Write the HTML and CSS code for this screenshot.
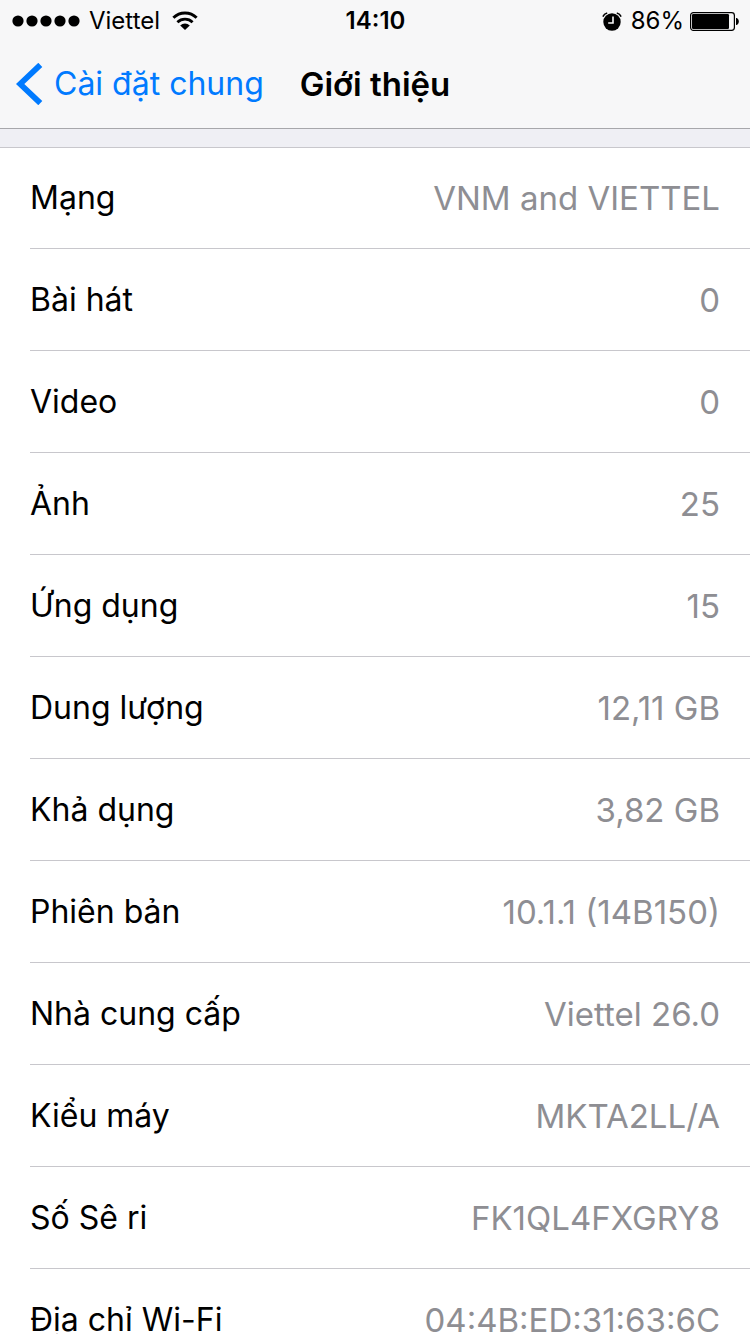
FILE: index.html
```html
<!DOCTYPE html>
<html lang="vi">
<head>
	<meta charset="utf-8">
	<meta name="viewport" content="width=device-width">
	<title>Giới thiệu</title>
	<link rel="stylesheet" href="styles.css">
</head>
<body>

<header class="header">
	<div class="status">
		<div class="status-left">
			<svg class="signal" width="68" height="12" viewBox="0 0 68 12">
				<circle cx="6" cy="6" r="5.6"/>
				<circle cx="20" cy="6" r="5.6"/>
				<circle cx="34" cy="6" r="5.6"/>
				<circle cx="48" cy="6" r="5.6"/>
				<circle cx="62" cy="6" r="5.6"/>
			</svg>
			<span>Viettel</span>
			<svg class="wifi" width="26" height="20" viewBox="0 0 26 20">
				<path d="M1.400 6.700a16.600 16.600 0 0 1 23.200 0" fill="none" stroke="#000" stroke-width="3"/>
				<path d="M5.400 11.200a11 11 0 0 1 15.200 0" fill="none" stroke="#000" stroke-width="2.800"/>
				<path d="M8.200 14.500a7 7 0 0 1 9.600 0L13 19z"/>
			</svg>
		</div>
		<time class="time">14:10</time>
		<div class="status-right">
			<svg class="alarm" width="20" height="19" viewBox="0 0 20 19">
				<circle cx="10" cy="10" r="8.700"/>
				<path d="M.9 4.600A6 6 0 0 1 5.200 1M19.100 4.600A6 6 0 0 0 14.800 1" fill="none" stroke="#000" stroke-width="1.600"/>
				<path d="M11 4.600v6.400H6.200" fill="none" stroke="#f7f7f8" stroke-width="1.600"/>
			</svg>
			<span>86%</span>
			<svg class="battery" width="49" height="19" viewBox="0 0 49 19">
				<rect x=".6" y=".6" width="43.800" height="17.800" rx="2.800" fill="none" stroke="#000" stroke-width="1.200"/>
				<rect x="2" y="2" width="37" height="15" rx="1.200"/>
				<path d="M46 6h.6c1.300.3 2.200 1.800 2.200 3.500s-.9 3.200-2.200 3.500H46z"/>
			</svg>
		</div>
	</div>
	<nav class="nav">
		<a class="back" href="#">
			<svg width="27" height="42" viewBox="0 0 27 42">
				<path d="M24.300 1.900 4.200 21l20.100 19.100" fill="none" stroke="#007aff" stroke-width="5.800"/>
			</svg>
			<span>Cài đặt chung</span>
		</a>
		<h1 class="title">Giới thiệu</h1>
	</nav>
</header>

<main class="content">
	<dl class="list">
		<div class="row"><dt>Mạng</dt><dd>VNM and VIETTEL</dd></div>
		<div class="row"><dt>Bài hát</dt><dd>0</dd></div>
		<div class="row"><dt>Video</dt><dd>0</dd></div>
		<div class="row"><dt>Ảnh</dt><dd>25</dd></div>
		<div class="row"><dt>Ứng dụng</dt><dd>15</dd></div>
		<div class="row"><dt>Dung lượng</dt><dd>12,11 GB</dd></div>
		<div class="row"><dt>Khả dụng</dt><dd>3,82 GB</dd></div>
		<div class="row"><dt>Phiên bản</dt><dd>10.1.1 (14B150)</dd></div>
		<div class="row"><dt>Nhà cung cấp</dt><dd>Viettel 26.0</dd></div>
		<div class="row"><dt>Kiểu máy</dt><dd>MKTA2LL/A</dd></div>
		<div class="row"><dt>Số Sê ri</dt><dd>FK1QL4FXGRY8</dd></div>
		<div class="row"><dt>Địa chỉ Wi-Fi</dt><dd>04:4B:ED:31:63:6C</dd></div>
	</dl>
</main>

</body>
</html>
```

FILE: styles.css
```css
* { box-sizing: border-box; }
body { margin: 0;height: 100vh;display: flex;flex-direction: column;background: #efeff4;color: #000;font-family: Inter, "Liberation Sans", sans-serif;font-size: 33px;line-height: 40px; }

/* header */
.header { flex: none;background: #f7f7f8;border-bottom: 1px solid #a7a7ab; }
.status { height: 40px;padding: 1px 11px 0 12px;display: grid;grid-template-columns: 1fr auto 1fr;align-items: center;font-size: 24px; }
.status-left, .status-right { display: flex;align-items: center; }
.status-left { gap: 9px; }
.status-right { justify-content: flex-end;gap: 6px; }
.wifi { margin-left: 3px; }
.alarm { margin-right: 3px; }
.time { font-weight: 600; }
.nav { height: 88px;padding: 0 16px;display: grid;grid-template-columns: 1fr auto 1fr;align-items: center; }
.back { display: flex;align-items: center;gap: 11px;color: #007aff;font-size: 32px;text-decoration: none;white-space: nowrap; }
.title { margin: 0;font-size: 33px;font-weight: 600;white-space: nowrap; }

/* list */
.content { flex: 1;min-height: 0;padding-top: 18px;overflow: hidden; }
.list { margin: 0;padding-left: 30px;background: #fff;border-top: 1px solid #c8c7cc; }
.row { height: 102px;padding-right: 30px;display: flex;align-items: center;justify-content: space-between;border-bottom: 1px solid #c8c7cc; }
.row:first-child { height: 101px; }
.row dt { font-size: 32px; }
.row dd { margin: 0;color: #8e8e93; }
```
